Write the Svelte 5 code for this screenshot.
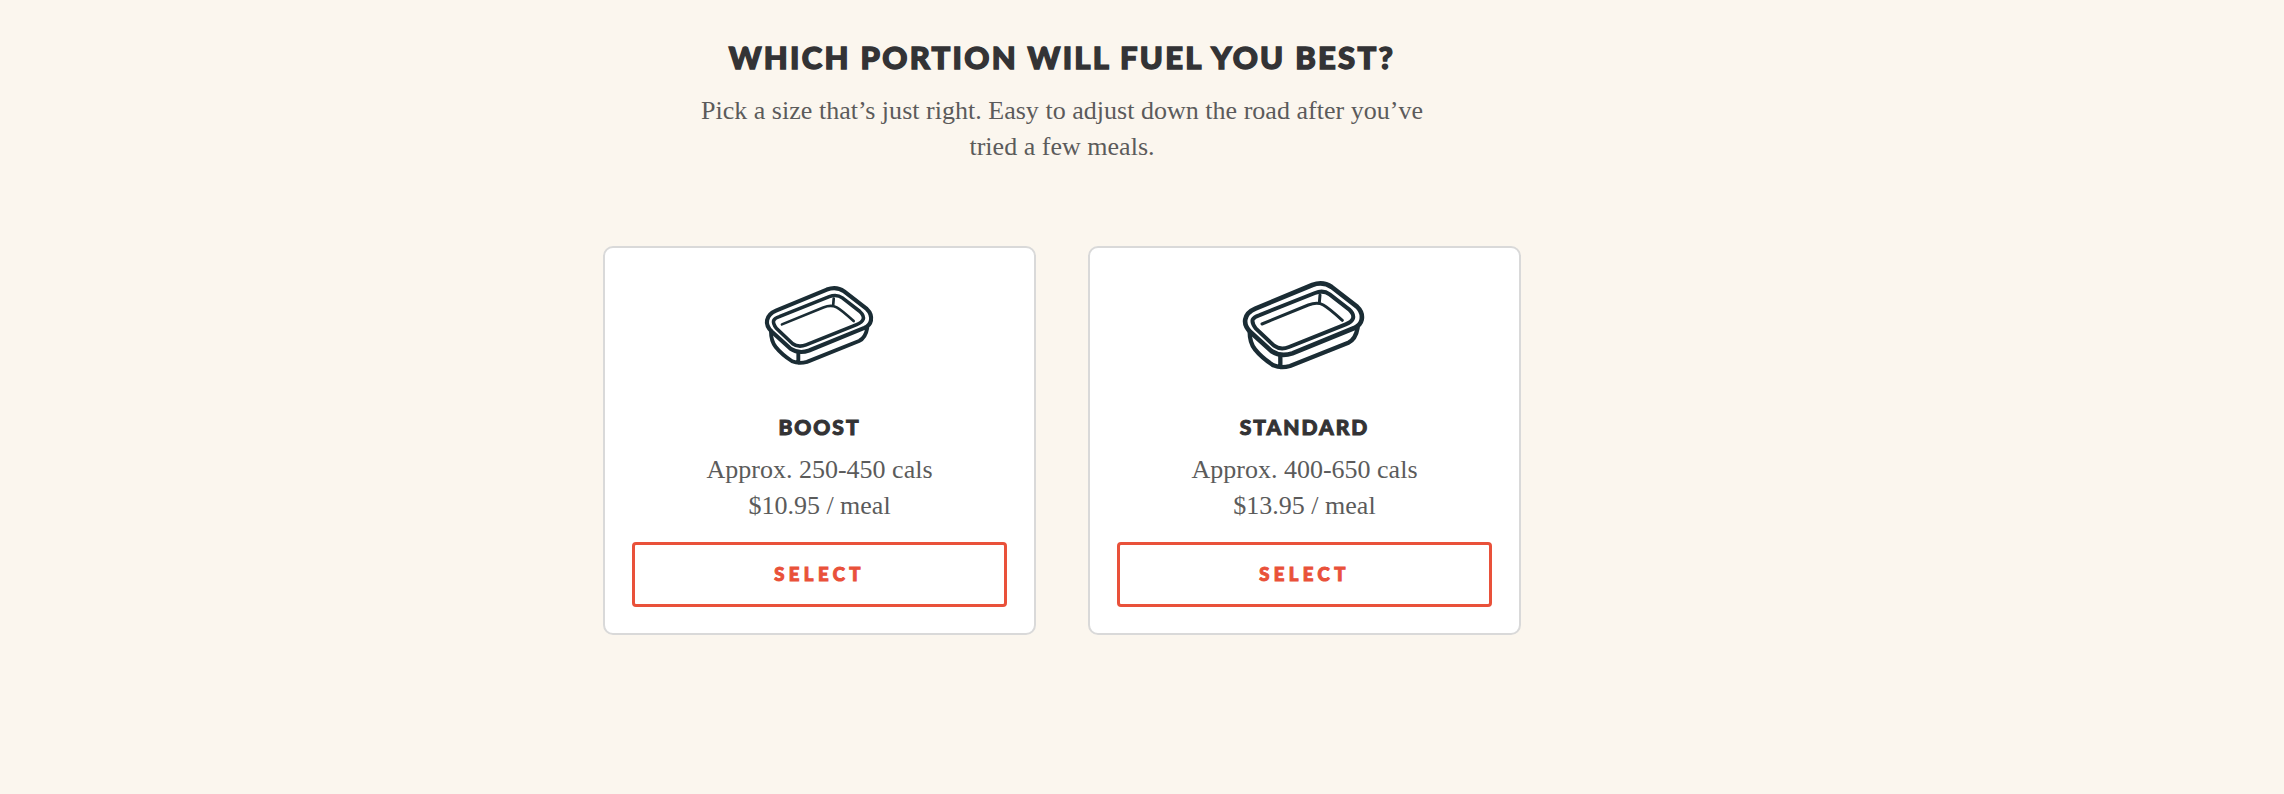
<script lang="ts">
  interface Portion {
    name: string;
    cals: string;
    price: string;
    iconWidth: number;
  }

  const portions: Portion[] = [
    { name: "Boost", cals: "250-450", price: "$10.95", iconWidth: 108 },
    { name: "Standard", cals: "400-650", price: "$13.95", iconWidth: 121 },
  ];
</script>

<main class="page">
  <header class="intro">
    <h1>Which portion will fuel you best?</h1>
    <p>
      Pick a size that’s just right. Easy to adjust down the road after you’ve
      <br />tried a few meals.
    </p>
  </header>

  <div class="portions">
    {#each portions as portion}
      <section class="card">
        <div class="icon">
          <svg viewBox="504 140 363 265" style="width: {portion.iconWidth}px">
            <path
              class="rim"
              d="M541 223 L712 152 Q744 140 770 158 L846 217 Q864 234 860 256 Q857 272 838 281 L652 357 Q618 369 590 351 L527 294 Q507 274 511 255 Q515 234 541 223Z"
            />
            <path
              class="inner"
              d="M552 243 L720 176 Q745 166 764 180 L822 225 Q838 240 834 252 Q831 262 812 270 L642 338 Q616 348 597 334 L542 282 Q530 266 533 256 Q537 248 552 243Z"
            />
            <path
              class="fold"
              d="M561 269 L700 212 Q727 202 745 212 Q760 220 802 258 M735 182 L733 206"
            />
            <path
              class="base"
              d="M524 292 Q524 325 540 345 Q560 370 595 393 Q618 403 645 395 L820 325 Q842 315 848 280 M616 362 V398"
            />
          </svg>
        </div>
        <h2>{portion.name}</h2>
        <p class="cals">Approx. {portion.cals} cals</p>
        <p class="price">{portion.price} / meal</p>
        <button type="button">Select</button>
      </section>
    {/each}
  </div>
</main>

<style>
  :global(body) {
    background: #fbf6ee;
  }

  .page {
    box-sizing: border-box;
    min-height: 794px;
    padding: 38px 160px 0 0;
    display: flex;
    flex-direction: column;
    align-items: center;
    color: #5b5b5b;
    font-family: "Liberation Serif", serif;
    font-size: 26px;
    line-height: 36px;
    text-align: center;
  }

  h1,
  h2,
  p {
    margin: 0;
  }

  h1,
  h2,
  button {
    font-family: Lato, sans-serif;
    font-weight: 900;
    text-transform: uppercase;
    -webkit-text-stroke: 1px currentColor;
  }

  h1 {
    margin-bottom: 16px;
    color: #333335;
    font-size: 31px;
    line-height: 39px;
    letter-spacing: 2.3px;
    -webkit-text-stroke-width: 1.4px;
  }

  .intro p {
    white-space: nowrap;
    letter-spacing: 0.02px;
  }

  .portions {
    display: flex;
    gap: 51.6px;
    margin-top: 81px;
  }

  .card {
    box-sizing: border-box;
    width: 433.4px;
    height: 389px;
    padding: 0 27px;
    background: #fff;
    border: 2px solid #d9d9d9;
    border-radius: 10px;
  }

  /* icons */
  .icon {
    display: flex;
    align-items: center;
    justify-content: center;
    height: 155px;
    margin-bottom: 9px;
    padding-right: 2px;
  }
  svg {
    display: block;
    overflow: visible;
    fill: none;
    stroke: #1a2c34;
    stroke-linecap: round;
    stroke-linejoin: round;
  }
  .rim {
    stroke-width: 14;
  }
  .inner {
    stroke-width: 12;
  }
  .fold {
    stroke-width: 9;
  }
  .base {
    stroke-width: 13;
  }

  h2 {
    margin-bottom: 10px;
    color: #333335;
    font-size: 21px;
    line-height: 30px;
    letter-spacing: 2px;
  }

  button {
    display: block;
    width: 100%;
    height: 65px;
    margin-top: 18px;
    padding: 0 0 2px;
    background: #fff;
    border: 3px solid #e9513a;
    border-radius: 4px;
    color: #e9513a;
    font-size: 18.5px;
    letter-spacing: 4.4px;
  }
</style>
